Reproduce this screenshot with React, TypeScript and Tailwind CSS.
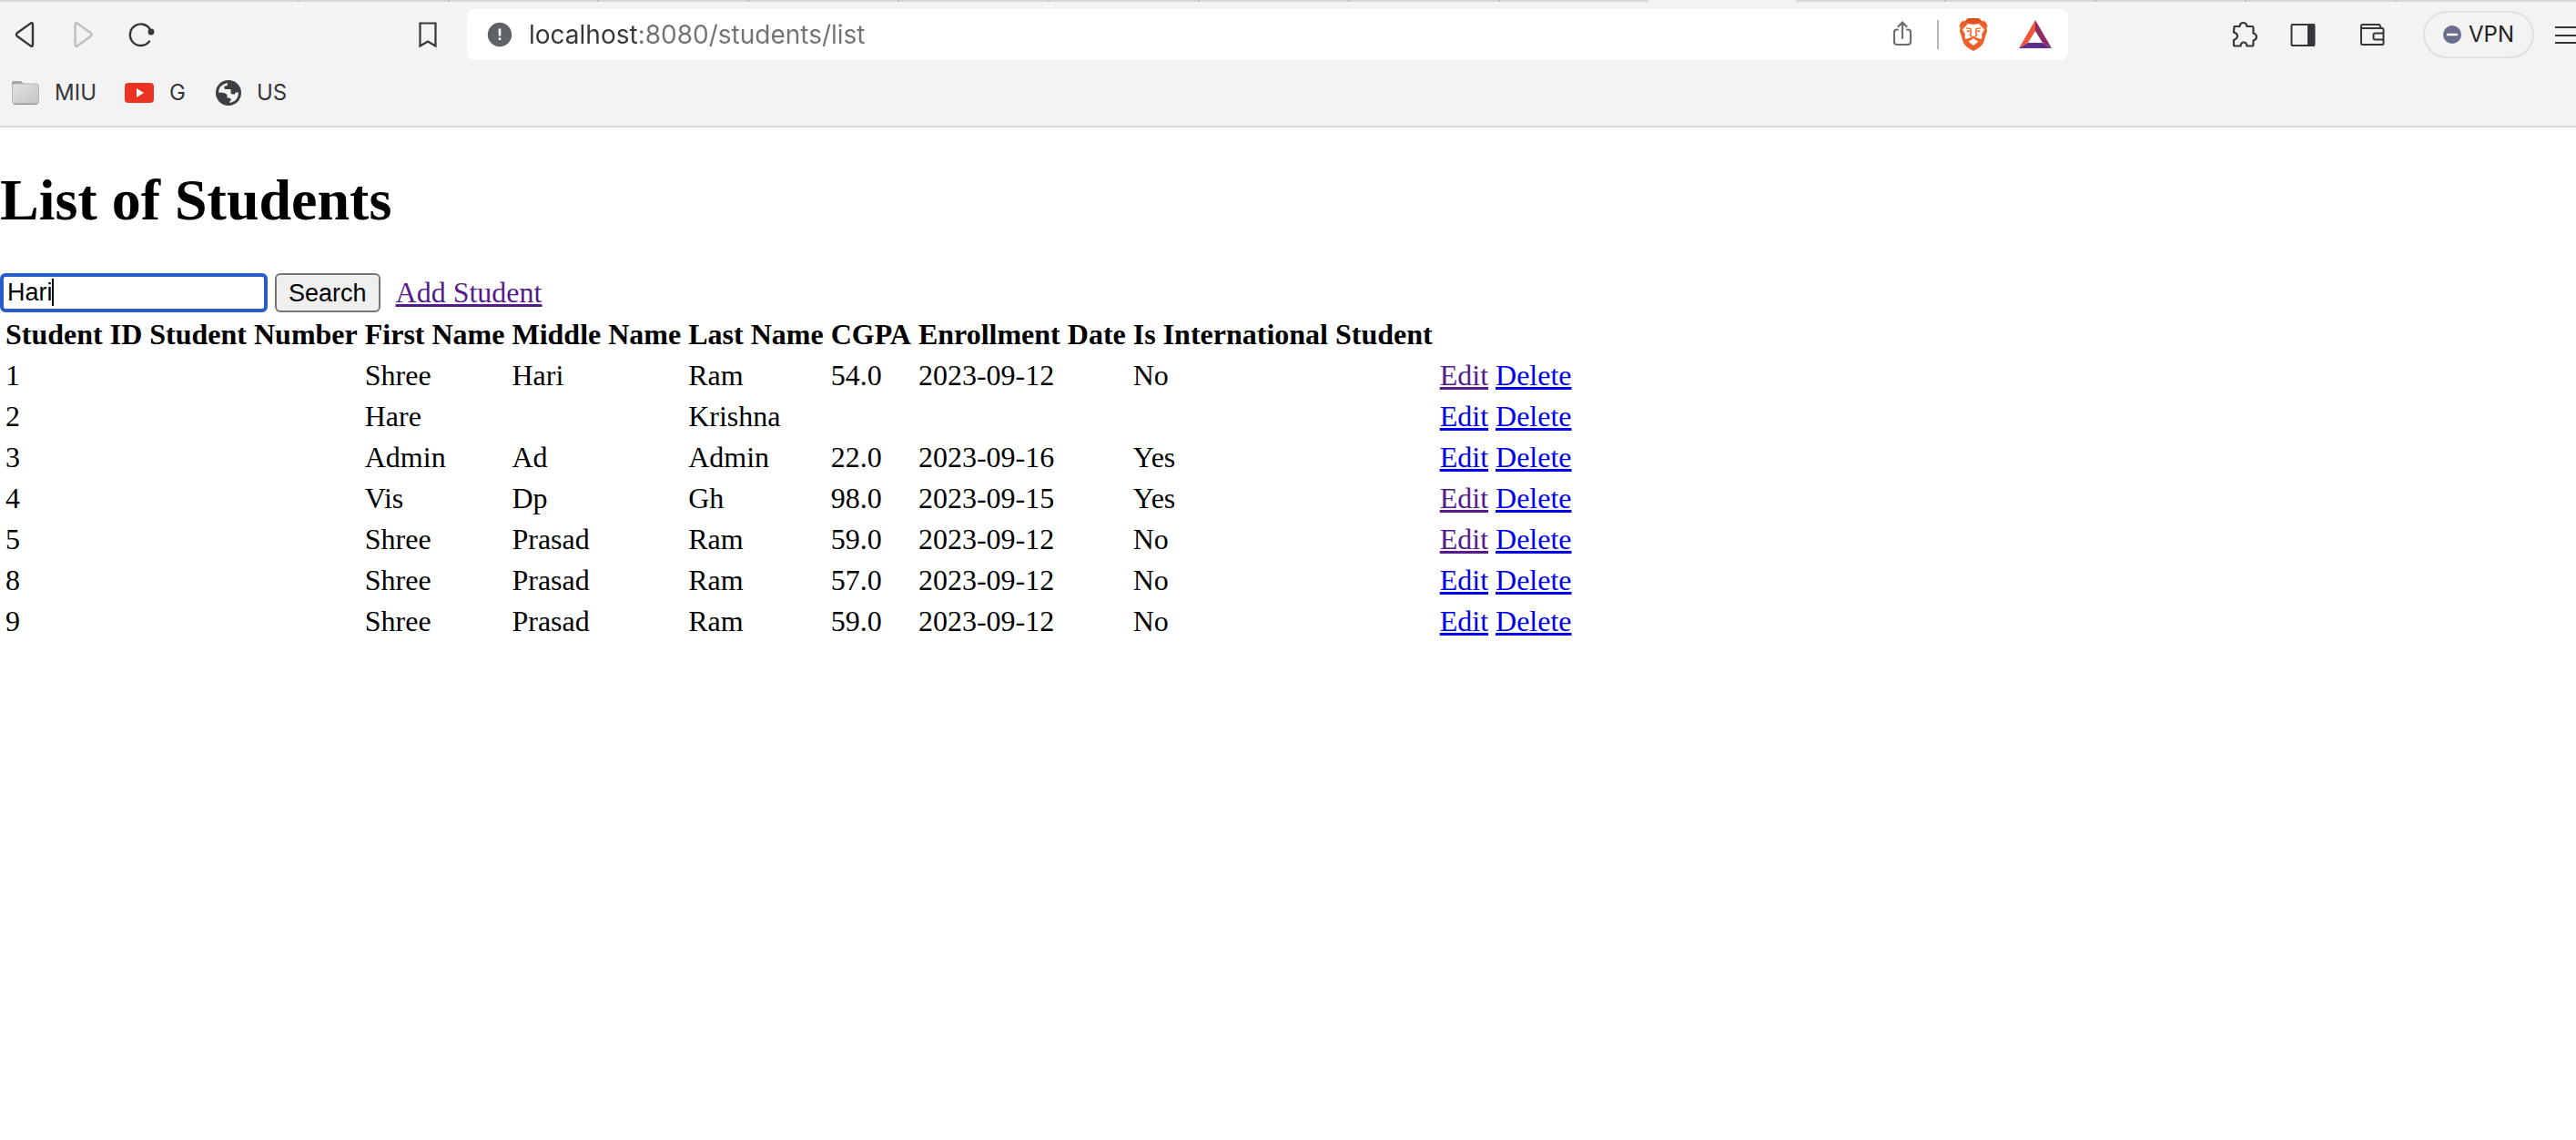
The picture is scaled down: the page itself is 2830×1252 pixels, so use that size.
import { useState } from "react";

const serif = "font-['Liberation_Serif',serif]";
const ui = "font-[Inter,sans-serif]";

const headers = ["Student ID", "Student Number", "First Name", "Middle Name", "Last Name", "CGPA", "Enrollment Date", "Is International Student"];

const students = [
  { id: "1", first: "Shree", middle: "Hari", last: "Ram", cgpa: "54.0", date: "2023-09-12", intl: "No", visited: true },
  { id: "2", first: "Hare", middle: "", last: "Krishna", cgpa: "", date: "", intl: "", visited: false },
  { id: "3", first: "Admin", middle: "Ad", last: "Admin", cgpa: "22.0", date: "2023-09-16", intl: "Yes", visited: false },
  { id: "4", first: "Vis", middle: "Dp", last: "Gh", cgpa: "98.0", date: "2023-09-15", intl: "Yes", visited: true },
  { id: "5", first: "Shree", middle: "Prasad", last: "Ram", cgpa: "59.0", date: "2023-09-12", intl: "No", visited: true },
  { id: "8", first: "Shree", middle: "Prasad", last: "Ram", cgpa: "57.0", date: "2023-09-12", intl: "No", visited: false },
  { id: "9", first: "Shree", middle: "Prasad", last: "Ram", cgpa: "59.0", date: "2023-09-12", intl: "No", visited: false },
];

function TabStrip() {
  return (
    <div className="flex h-[2px] bg-[#d5d9dc]">
      <div className="flex-[660] border-r-2 border-[#bcc2bd]" />
      {Array.from({ length: 15 }, (_, i) => (
        <div
          key={i}
          className={
            i === 9
              ? "flex-[329] bg-[#f3f3f3]"
              : i === 8 || i === 14
                ? "flex-[329]"
                : "flex-[329] border-r-2 border-[#bcc2bd]"
          }
        />
      ))}
      <div className="flex-[69]" />
    </div>
  );
}

function Toolbar() {
  return (
    <div className="flex h-[72px] items-center overflow-hidden pl-4 text-[#35363a]">
      <button aria-label="Back" className="mr-[41px] shrink-0">
        <svg width="24" height="32" viewBox="0 0 24 32" fill="none" stroke="currentColor" strokeWidth="2.4" strokeLinejoin="round">
          <path d="M2.8 14.3 17.6 3.6Q20 2.4 20 5V27Q20 29.6 17.6 28.4L2.8 17.7Q1 16 2.8 14.3Z" />
        </svg>
      </button>
      <button aria-label="Forward" className="mr-9 shrink-0 text-[#bdbebf]">
        <svg width="24" height="32" viewBox="0 0 24 32" fill="none" stroke="currentColor" strokeWidth="2.4" strokeLinejoin="round">
          <path d="M18.8 14.3 4 3.6Q1.6 2.4 1.6 5V27Q1.6 29.6 4 28.4L18.8 17.7Q20.600 16 18.800 14.300Z" />
        </svg>
      </button>
      <button aria-label="Reload" className="mr-[287px] shrink-0">
        <svg width="32" height="32" viewBox="0 0 32 32" fill="none" stroke="currentColor" strokeWidth="2.4" strokeLinecap="round">
          <path d="M23 23.500A11.800 11.800 0 1 1 24 10.500" />
          <circle cx="25" cy="13" r="3.400" fill="currentColor" stroke="none" />
        </svg>
      </button>
      <button aria-label="Bookmark this page" className="mr-[33px] shrink-0">
        <svg width="20" height="32" viewBox="0 0 20 32" fill="none" stroke="currentColor" strokeWidth="2.2">
          <path d="M1.500 3.500H18.500V28.500L10 23.500L1.500 28.500Z" />
        </svg>
      </button>
      <div className="flex h-14 min-w-0 flex-1 items-center rounded-lg bg-white pr-[17px] pl-[22px]">
        <svg className="mr-[18px] shrink-0" width="28" height="28" viewBox="0 0 28 28">
          <circle cx="14" cy="14" r="13.200" fill="#5f6368" />
          <path d="M14 7.500V15.500M14 17.500V20" stroke="#fff" strokeWidth="2.600" />
        </svg>
        <input
          aria-label="Address"
          type="text"
          defaultValue="localhost:8080/students/list"
          className={`${ui} h-10 min-w-0 flex-1 bg-[linear-gradient(to_right,#35363a_122px,#707275_122px)] bg-clip-text text-[28px] leading-9 text-transparent outline-none`}
        />
        <button aria-label="Share" className="mr-[27px] shrink-0 text-[#6f6f6f]">
          <svg width="22" height="30" viewBox="0 0 22 30" fill="none" stroke="currentColor" strokeWidth="2.2" strokeLinecap="round">
            <path d="M6 9.500H5Q2 9.500 2 12.500V23Q2 26 5 26H17Q20 26 20 23V12.500Q20 9.500 17 9.500H16M11 19V2M6.500 6 11 1.600 15.500 6" />
          </svg>
        </button>
        <div className="mr-[22px] h-8 w-[2px] shrink-0 bg-[#b5b5b5]" />
        <button aria-label="Brave Shields" className="mr-[33px] shrink-0">
          <BraveLion />
        </button>
        <button aria-label="Brave Rewards" className="shrink-0">
          <svg width="38" height="34" viewBox="0 0 38 34">
            <path d="M19 1V13L11 26 1 32Z" fill="#f1563a" />
            <path d="M19 1 37 32 27 26 19 13Z" fill="#8f2a63" />
            <path d="M1 32 11 26H27L37 32Z" fill="#5f2d8c" />
          </svg>
        </button>
      </div>
      <button aria-label="Extensions" className="mr-[35px] ml-[179px] shrink-0">
        <svg width="30" height="32" viewBox="0 0 30 32" fill="none" stroke="currentColor" strokeWidth="2.2" strokeLinejoin="round">
          <path d="M3.500 7H9.500Q10 3 13.500 3T17.500 7H23Q24.500 7 24.500 8.500V14.500Q28 15.500 28 18.500T24.500 22.500V27Q24.500 28.500 23 28.500H17.500Q17 24.500 14 24.500T10.500 28.500H4.500Q3 28.500 3 27V22Q7 20.500 7 17.500T3 13.500Z" />
        </svg>
      </button>
      <button aria-label="Sidebar" className="mr-12 shrink-0">
        <svg width="28" height="28" viewBox="0 0 28 28">
          <rect x="1.500" y="3" width="25" height="23" rx="1" fill="none" stroke="currentColor" strokeWidth="2" />
          <path d="M19 2.500H27V26.500H19Z" fill="currentColor" />
        </svg>
      </button>
      <button aria-label="Wallet" className="mr-[42px] shrink-0">
        <svg width="28" height="28" viewBox="0 0 28 28" fill="none" stroke="currentColor" strokeWidth="2" strokeLinejoin="round">
          <path d="M2 7V4.500Q2 3 3.500 3H22L24 7M2 7H25Q26.500 7 26.500 8.500V23.500Q26.500 25 25 25H3.500Q2 25 2 23.500ZM26 12.500H17.500Q15.500 12.500 15.500 14.500V17.500Q15.500 19.500 17.500 19.500H26" />
        </svg>
      </button>
      <button className={`${ui} flex h-[52px] shrink-0 items-center gap-2 rounded-full border-2 border-[#e1e1e1] px-5 text-2xl text-[#1d1f25]`}>
        <svg width="20" height="20" viewBox="0 0 20 20">
          <circle cx="10" cy="10" r="10" fill="#6b6f8d" />
          <path d="M5 10H15" stroke="#fff" strokeWidth="2.4" strokeLinecap="round" />
        </svg>
        VPN
      </button>
      <button aria-label="Menu" className="ml-[22px] shrink-0">
        <svg width="24" height="24" viewBox="0 0 24 24" stroke="currentColor" strokeWidth="2">
          <path d="M1 4H24M1 13H24M1 21H24" />
        </svg>
      </button>
    </div>
  );
}

function BraveLion() {
  return (
    <svg width="32" height="38" viewBox="0 0 32 38">
      <path d="M10 1H22L25 4 29 4.500 31.500 9 30.500 12 31 15 27 28Q25.500 31 22 33.500L16 37 10 33.500Q6.500 31 5 28L1 15 1.500 12 .5 9 3 4.500 7 4Z" fill="#f0612a" />
      <path d="M10 1H22L25 4 22 6.500H10L7 4Z" fill="#dd5326" />
      <path d="M10 7 16 8 22 7 28 13.500 25 18.500 25.500 22 24 24.500 18.500 22.500 16 23.500 13.500 22.500 8 24.500 6.500 22 7 18.500 4 13.500Z" fill="#fff" />
      <path d="M10.500 26.500 16 23.500 21.500 26.500 16 31Z" fill="#fff" />
      <path d="M8 11.800 13 12.500 13.500 17.500 12 19.500 16 22 20 19.500 18.500 17.500 19 12.500 24 11.800M8.500 14.800 12.500 15.500M23.500 14.800 19.500 15.500" fill="none" stroke="#f0612a" strokeWidth="1.300" />
      <path d="M8 24.500 16 22 24 24.500" fill="none" stroke="#f0612a" strokeWidth="1.300" />
    </svg>
  );
}

function Bookmarks() {
  return (
    <nav className={`${ui} flex h-[66px] items-center border-b-2 border-[#d5d9dc] pb-2 pl-3 text-2xl text-[#35363a]`}>
      <a href="#miu" className="mr-[30px] flex items-center gap-4">
        <svg width="32" height="30" viewBox="0 0 32 30">
          <defs>
            <linearGradient id="folder" x1="0" y1="0" x2="1" y2="1">
              <stop offset="0" stopColor="#e2e2e2" />
              <stop offset="1" stopColor="#c4c4c4" />
            </linearGradient>
          </defs>
          <path d="M1 6V4Q1 2 3 2H11L13 4H14V8H1Z" fill="#a0a0a0" />
          <rect x="1.500" y="5" width="29" height="22" rx="2.500" fill="url(#folder)" stroke="#b8b8b8" />
          <path d="M3 27.300H29" stroke="#999" strokeWidth="1.400" />
        </svg>
        MIU
      </a>
      <a href="#g" className="mr-8 flex items-center gap-4">
        <svg width="34" height="26" viewBox="0 0 34 26">
          <rect x="1" y="2" width="32" height="22" rx="4" fill="#ea3323" />
          <path d="M14 8 22 13 14 18Z" fill="#fff" />
        </svg>
        G
      </a>
      <a href="#us" className="flex items-center gap-4">
        <svg width="30" height="30" viewBox="0 0 30 30">
          <circle cx="15" cy="15" r="14" fill="#3c4043" />
          <path d="M4 14.500Q4.500 6 14 4V5.500Q14 7.500 12 7.500H10.500V10Q10.500 11 11.500 11H17.500V14.500Q17.500 16.500 19.500 16.500H21.500Q22.500 16.500 22.500 15.500V14.500H26Q26 24 16.500 26V23.500H18Q18 20.500 15 20.500H13.500Q14.500 16.500 11.500 15.500Q9 14.500 4 14.500Z" fill="#f3f3f3" />
        </svg>
        US
      </a>
    </nav>
  );
}

export default function App() {
  const [query, setQuery] = useState("Hari");
  return (
    <div className="min-h-screen overflow-hidden bg-white">
      <header className="bg-[#f3f3f3]">
        <TabStrip />
        <Toolbar />
        <Bookmarks />
      </header>
      <main className={`${serif} pt-[43px] text-[32px] leading-[37px] text-black`}>
        <h1 className="mb-[43px] text-[64px] leading-[74px] font-bold">List of Students</h1>
        <form className="flex h-[43px] items-center" onSubmit={(e) => e.preventDefault()}>
          <div className="relative">
            <input
              aria-label="Search students"
              type="text"
              value={query}
              onChange={(e) => setQuery(e.target.value)}
              className="block h-[43px] w-[294px] rounded-md border-4 border-[#265dc9] bg-white px-1 font-['Liberation_Sans',sans-serif] text-[27px] caret-transparent outline-none"
            />
            <span className="absolute top-[6px] left-[57px] h-[30px] w-[2px] bg-black" />
          </div>
          <button type="submit" className="mr-[17px] ml-2 h-[43px] rounded-md border-2 border-[#767676] bg-[#efefef] px-[13px] font-['Liberation_Sans',sans-serif] text-[27px] leading-[30px]">
            Search
          </button>
          <a href="#add" className="text-[#551a8b] underline decoration-3">Add Student</a>
        </form>
        <table className="border-separate border-spacing-1">
          <thead>
            <tr>
              {headers.map((h) => (
                <th key={h} className="p-[2px] font-bold whitespace-nowrap">{h}</th>
              ))}
            </tr>
          </thead>
          <tbody>
            {students.map((s) => (
              <tr key={s.id}>
                <td className="p-[2px]">{s.id}</td>
                <td className="p-[2px]" />
                <td className="p-[2px]">{s.first}</td>
                <td className="p-[2px]">{s.middle}</td>
                <td className="p-[2px]">{s.last}</td>
                <td className="p-[2px]">{s.cgpa}</td>
                <td className="p-[2px]">{s.date}</td>
                <td className="p-[2px]">{s.intl}</td>
                <td className="p-[2px] whitespace-nowrap">
                  <a href="#edit" className={s.visited ? "text-[#551a8b] underline decoration-3" : "text-[#0000ee] underline decoration-3"}>Edit</a>{" "}
                  <a href="#delete" className="text-[#0000ee] underline decoration-3">Delete</a>
                </td>
              </tr>
            ))}
          </tbody>
        </table>
      </main>
    </div>
  );
}
